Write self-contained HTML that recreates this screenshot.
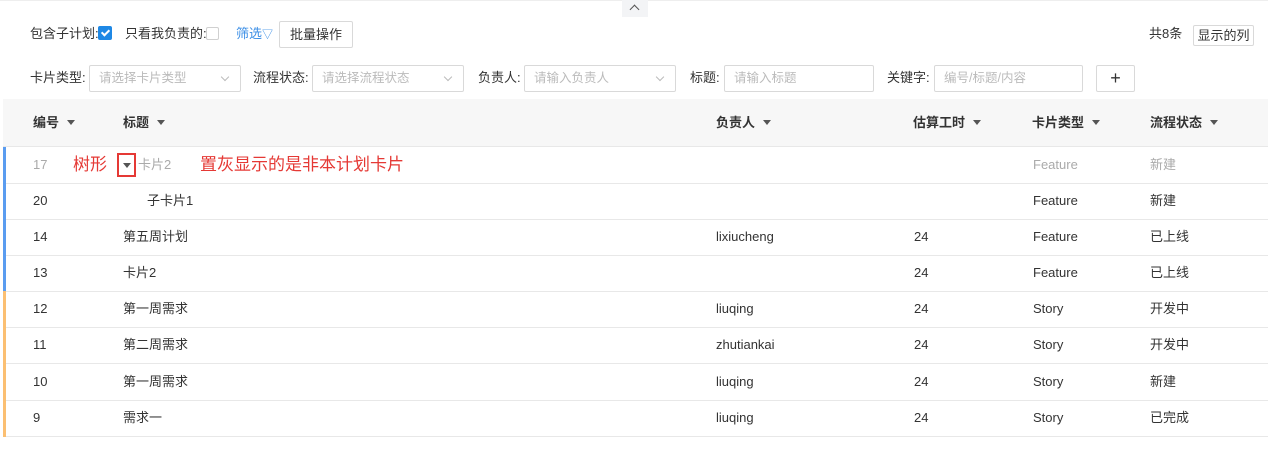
<!DOCTYPE html>
<html><head><meta charset="utf-8"><style>
*{box-sizing:border-box;margin:0;padding:0}
body{width:1268px;height:456px;background:#fff;font-family:"Liberation Sans","Noto Sans CJK SC",sans-serif;font-size:13px;line-height:18px;color:#333;position:relative;overflow:hidden}
.a{position:absolute;white-space:nowrap;line-height:18px}
.inp{position:absolute;height:27px;border:1px solid #d9d9d9;border-radius:2px;color:#bbb;font-size:12.5px;line-height:25px;padding-left:9px}
.chev{position:absolute;right:12px;top:8px;width:6px;height:6px;border-right:1px solid #bbb;border-bottom:1px solid #bbb;transform:rotate(45deg)}
.btn{position:absolute;border:1px solid #d9d9d9;border-radius:2px;text-align:center;background:#fff}
.tri{display:inline-block;width:0;height:0;border-left:4px solid transparent;border-right:4px solid transparent;border-top:5px solid #555;margin-left:8px;vertical-align:2px}
.row{position:absolute;left:3px;width:1265px;height:37px;border-bottom:1px solid #e8e8e8}
.row span{position:absolute;top:9px;white-space:nowrap;line-height:18px}
.bar{position:absolute;left:0;top:0;width:3px;height:37px}
</style></head><body>
<div class="a" style="left:0;top:0;width:1268px;height:1px;background:#eee"></div>
<div class="a" style="left:622px;top:0;width:26px;height:17px;background:#f3f4f6"></div>
<div class="a" style="left:631px;top:6px;width:7px;height:7px;border-left:1px solid #555;border-top:1px solid #555;transform:rotate(45deg)"></div>

<div class="a" style="left:30px;top:25px">包含子计划:</div>
<div class="a" style="left:98px;top:26px;width:14px;height:14px;background:#1e88e5;border-radius:2px"></div>
<div class="a" style="left:103px;top:28px;width:5px;height:8px;border-right:2px solid #fff;border-bottom:2px solid #fff;transform:rotate(45deg)"></div>
<div class="a" style="left:125px;top:25px">只看我负责的:</div>
<div class="a" style="left:206px;top:27px;width:13px;height:13px;border:1px solid #d0d0d0;border-radius:2px"></div>
<div class="a" style="left:236px;top:25px;color:#3a8ee6">筛选<span style="font-size:11px">▽</span></div>
<div class="btn" style="left:279px;top:21px;width:74px;height:27px;line-height:25px">批量操作</div>
<div class="a" style="left:1149px;top:25px">共8条</div>
<div class="btn" style="left:1193px;top:25px;width:61px;height:21px;line-height:19px">显示的列</div>

<div class="a" style="left:30px;top:69px">卡片类型:</div>
<div class="inp" style="left:89px;top:65px;width:152px">请选择卡片类型<i class="chev"></i></div>
<div class="a" style="left:253px;top:69px">流程状态:</div>
<div class="inp" style="left:312px;top:65px;width:152px">请选择流程状态<i class="chev"></i></div>
<div class="a" style="left:478px;top:69px">负责人:</div>
<div class="inp" style="left:524px;top:65px;width:152px">请输入负责人<i class="chev"></i></div>
<div class="a" style="left:690px;top:69px">标题:</div>
<div class="inp" style="left:724px;top:65px;width:150px">请输入标题</div>
<div class="a" style="left:887px;top:69px">关键字:</div>
<div class="inp" style="left:934px;top:65px;width:149px">编号/标题/内容</div>
<div class="btn" style="left:1096px;top:65px;width:39px;height:27px;line-height:24px;font-size:18px">+</div>

<div class="a" style="left:3px;top:99px;width:1265px;height:48px;background:#f7f7f7;border-bottom:1px solid #e8e8e8;font-weight:bold">
<span class="a" style="left:30px;top:15px">编号<i class="tri"></i></span>
<span class="a" style="left:120px;top:15px">标题<i class="tri"></i></span>
<span class="a" style="left:713px;top:15px">负责人<i class="tri"></i></span>
<span class="a" style="left:910px;top:15px">估算工时<i class="tri"></i></span>
<span class="a" style="left:1029px;top:15px">卡片类型<i class="tri"></i></span>
<span class="a" style="left:1147px;top:15px">流程状态<i class="tri"></i></span>
</div>

<div class="row" style="top:147px;color:#aaa"><i class="bar" style="background:#5a9cf0"></i><span style="left:30px">17</span><span style="left:135px">卡片2</span><span style="left:1030px">Feature</span><span style="left:1147px">新建</span>
<span style="left:70px;top:7px;color:#e53935;font-size:17px;line-height:22px">树形</span>
<i style="position:absolute;left:114px;top:6px;width:19px;height:24px;border:2px solid #e53935"></i>
<i style="position:absolute;left:120px;top:16px;border-left:4px solid transparent;border-right:4px solid transparent;border-top:5px solid #555"></i>
<span style="left:197px;top:7px;color:#e53935;font-size:17px;line-height:22px">置灰显示的是非本计划卡片</span></div>
<div class="row" style="top:183px"><i class="bar" style="background:#5a9cf0"></i><span style="left:30px">20</span><span style="left:144px">子卡片1</span><span style="left:1030px">Feature</span><span style="left:1147px">新建</span></div>
<div class="row" style="top:219px"><i class="bar" style="background:#5a9cf0"></i><span style="left:30px">14</span><span style="left:120px">第五周计划</span><span style="left:713px">lixiucheng</span><span style="left:911px">24</span><span style="left:1030px">Feature</span><span style="left:1147px">已上线</span></div>
<div class="row" style="top:255px"><i class="bar" style="background:#5a9cf0"></i><span style="left:30px">13</span><span style="left:120px">卡片2</span><span style="left:911px">24</span><span style="left:1030px">Feature</span><span style="left:1147px">已上线</span></div>
<div class="row" style="top:291px"><i class="bar" style="background:#fbbf72"></i><span style="left:30px">12</span><span style="left:120px">第一周需求</span><span style="left:713px">liuqing</span><span style="left:911px">24</span><span style="left:1030px">Story</span><span style="left:1147px">开发中</span></div>
<div class="row" style="top:327px"><i class="bar" style="background:#fbbf72"></i><span style="left:30px">11</span><span style="left:120px">第二周需求</span><span style="left:713px">zhutiankai</span><span style="left:911px">24</span><span style="left:1030px">Story</span><span style="left:1147px">开发中</span></div>
<div class="row" style="top:364px"><i class="bar" style="background:#fbbf72"></i><span style="left:30px">10</span><span style="left:120px">第一周需求</span><span style="left:713px">liuqing</span><span style="left:911px">24</span><span style="left:1030px">Story</span><span style="left:1147px">新建</span></div>
<div class="row" style="top:400px"><i class="bar" style="background:#fbbf72"></i><span style="left:30px">9</span><span style="left:120px">需求一</span><span style="left:713px">liuqing</span><span style="left:911px">24</span><span style="left:1030px">Story</span><span style="left:1147px">已完成</span></div>
</body></html>
